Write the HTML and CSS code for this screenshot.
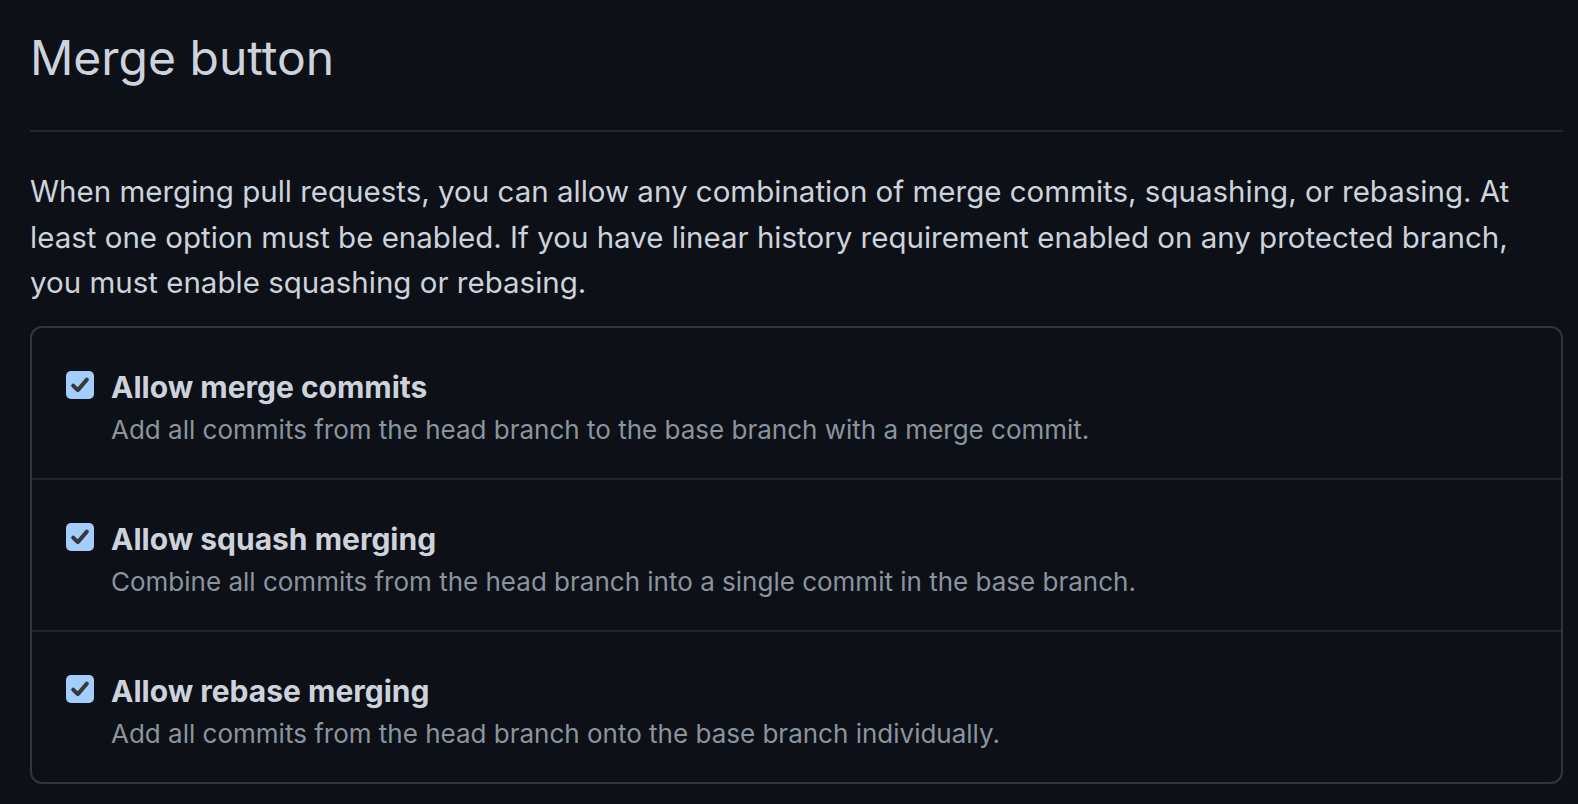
FILE: index.html
```html
<!DOCTYPE html>
<html lang="en">
<head>
<meta charset="utf-8">
<title>Merge button</title>
<link rel="stylesheet" href="styles.css">
</head>
<body>
<div class="page">
  <div class="subhead">
    <h2 class="subhead-heading">Merge button</h2>
  </div>
  <p class="intro">When merging pull requests, you can allow any combination of merge commits, squashing, or rebasing. At least one option must be enabled. If you have linear history requirement enabled on any protected branch, you must enable squashing or rebasing.</p>
  <div class="box">
    <div class="row">
      <span class="check"><svg viewBox="0 0 28 28" width="28" height="28"><rect x="0" y="0" width="28" height="28" rx="5" fill="#a2cdfd"/><path d="M7.2 14.6 L11.8 19.2 L20.8 8.6" fill="none" stroke="#36383d" stroke-width="4" stroke-linecap="round" stroke-linejoin="round"/></svg></span>
      <div class="text">
        <div class="title">Allow merge commits</div>
        <div class="note">Add all commits from the head branch to the base branch with a merge commit.</div>
      </div>
    </div>
    <div class="row">
      <span class="check"><svg viewBox="0 0 28 28" width="28" height="28"><rect x="0" y="0" width="28" height="28" rx="5" fill="#a2cdfd"/><path d="M7.2 14.6 L11.8 19.2 L20.8 8.6" fill="none" stroke="#36383d" stroke-width="4" stroke-linecap="round" stroke-linejoin="round"/></svg></span>
      <div class="text">
        <div class="title">Allow squash merging</div>
        <div class="note">Combine all commits from the head branch into a single commit in the base branch.</div>
      </div>
    </div>
    <div class="row">
      <span class="check"><svg viewBox="0 0 28 28" width="28" height="28"><rect x="0" y="0" width="28" height="28" rx="5" fill="#a2cdfd"/><path d="M7.2 14.6 L11.8 19.2 L20.8 8.6" fill="none" stroke="#36383d" stroke-width="4" stroke-linecap="round" stroke-linejoin="round"/></svg></span>
      <div class="text">
        <div class="title">Allow rebase merging</div>
        <div class="note">Add all commits from the head branch onto the base branch individually.</div>
      </div>
    </div>
  </div>
</div>
</body>
</html>
```
FILE: styles.css
```css
html, body {
  margin: 0;
  padding: 0;
  background: #0d1117;
}
body {
  font-family: Inter, "Noto Sans", "Liberation Sans", sans-serif;
  color: #cdd3dc;
}
.page {
  width: 1533px;
  padding-left: 30px;
}
.subhead {
  border-bottom: 2px solid #21262d;
  padding-top: 26px;
  height: 132px;
  box-sizing: border-box;
}
.subhead-heading {
  margin: 0;
  font-size: 48px;
  font-weight: 400;
  line-height: 64px;
}
.intro {
  margin: 0;
  padding-top: 37px;
  padding-right: 10px;
  font-size: 29.5px;
  line-height: 45.5px;
}
.box {
  margin-top: 20px;
  border: 2px solid #30363d;
  border-radius: 12px;
}
.row {
  display: flex;
  align-items: flex-start;
  gap: 17px;
  padding: 37px 34px 29px;
  border-top: 2px solid #21262d;
}
.row:first-child {
  border-top: 0;
}
.check {
  display: block;
  width: 28px;
  height: 28px;
  margin-top: 6px;
  flex: none;
}
.check svg {
  display: block;
}
.title {
  font-size: 30px;
  font-weight: 700;
  line-height: 45px;
}
.note {
  font-size: 26px;
  line-height: 39px;
  color: #8b949e;
}
```
